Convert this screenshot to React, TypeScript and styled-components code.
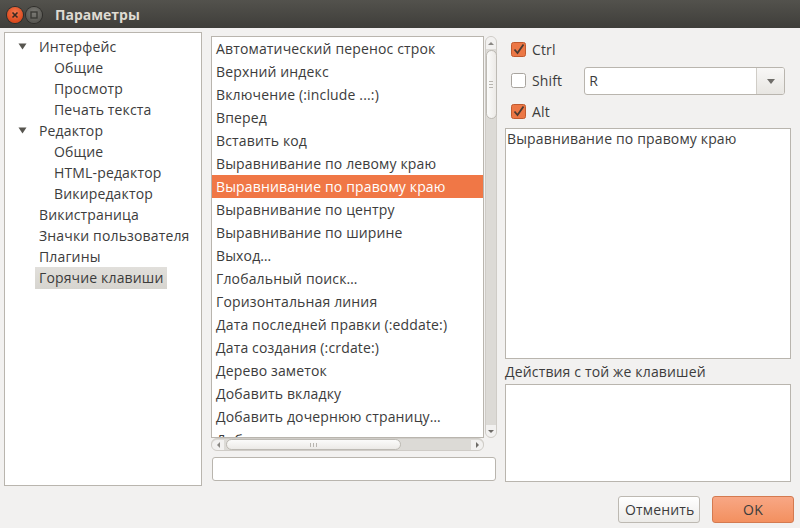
import React from 'react';
import styled, { createGlobalStyle, css } from 'styled-components';

const FONT = `"Open Sans", "Noto Sans", "DejaVu Sans", sans-serif`;
const TEXT = '#3c3c3c';
const BORDER = '#b9b5ae';

const GlobalStyle = createGlobalStyle`
  html, body {
    margin: 0;
    padding: 0;
    background: #f2f1f0;
  }
  body {
    font-family: ${FONT};
    font-size: 14px;
    letter-spacing: 0.15px;
    color: ${TEXT};
  }
`;

const Window = styled.div`
  width: 800px;
  height: 528px;
  display: flex;
  flex-direction: column;
  background: #f2f1f0;
  overflow: hidden;
`;

const TitleBar = styled.div`
  height: 28px;
  flex: none;
  display: flex;
  align-items: center;
  padding-left: 7px;
  gap: 3px;
  background: linear-gradient(#53524d, #3f3e3a);
  box-sizing: border-box;
`;

const WinButton = styled.div<{ $close?: boolean }>`
  width: 16px;
  height: 16px;
  border-radius: 50%;
  display: flex;
  align-items: center;
  justify-content: center;
  margin-top: 2px;
  box-shadow: 0 0 0 1px #2e2d2a;
  ${(p) =>
    p.$close
      ? css`
          background: radial-gradient(circle at 50% 35%, #f4784e, #dc4a1e 70%);
        `
      : css`
          background: radial-gradient(circle at 50% 35%, #7b7a75, #5a5954 70%);
        `}
`;

const Title = styled.div`
  margin-left: 10px;
  font-weight: bold;
  font-size: 14px;
  letter-spacing: 0;
  color: #dfdbd2;
`;

const Main = styled.div`
  height: 458px;
  flex: none;
  display: flex;
  padding: 4px 9px 0 4px;
  box-sizing: border-box;
  gap: 9px;
`;

const TreePanel = styled.div`
  width: 198px;
  height: 454px;
  flex: none;
  box-sizing: border-box;
  background: #fff;
  border: 1px solid ${BORDER};
  padding-top: 3px;
`;

const TreeRow = styled.div<{ $level: number }>`
  height: 21px;
  display: flex;
  align-items: center;
  padding-left: ${(p) => p.$level * 15}px;
`;

const ArrowSlot = styled.div`
  width: 30px;
  flex: none;
  display: flex;
  align-items: center;
  padding-left: 13px;
  box-sizing: border-box;
`;

const TreeLabel = styled.div<{ $selected?: boolean }>`
  height: 21px;
  line-height: 21px;
  padding: 0 4px;
  white-space: nowrap;
  ${(p) =>
    p.$selected &&
    css`
      background: linear-gradient(#e1dfdb, #d6d4cf);
      height: 22px;
      line-height: 22px;
    `}
`;

const Middle = styled.div`
  width: 285px;
  flex: none;
  display: flex;
  flex-direction: column;
  padding-top: 4px;
`;

const ListGrid = styled.div`
  display: grid;
  grid-template-columns: 273px 12px;
  grid-template-rows: 401px 13px;
  column-gap: 1px;
`;

const ListBox = styled.div`
  background: #fff;
  border: 1px solid ${BORDER};
  box-sizing: border-box;
  overflow: hidden;
  height: 402px;
`;

const ListRow = styled.div<{ $selected?: boolean }>`
  height: 23px;
  line-height: 23px;
  padding-left: 4px;
  white-space: nowrap;
  ${(p) =>
    p.$selected &&
    css`
      background: #f07746;
      color: #fff;
    `}
`;

const VScroll = styled.div`
  display: flex;
  flex-direction: column;
  align-items: center;
  background: #dcdad6;
  border-radius: 6px;
  border: 1px solid #cfccc7;
  box-sizing: border-box;
  height: 402px;
`;

const HScroll = styled.div`
  display: flex;
  align-items: center;
  background: #dcdad6;
  border-radius: 6px;
  border: 1px solid #cfccc7;
  box-sizing: border-box;
  height: 13px;
  margin-top: 1px;
`;

const ScrollArrow = styled.div<{ $dir: 'up' | 'down' | 'left' | 'right' }>`
  flex: none;
  width: 10px;
  height: 10px;
  display: flex;
  align-items: center;
  justify-content: center;
  background: #f2f1f0;
  ${(p) =>
    p.$dir === 'up'
      ? 'border-radius: 5px 5px 0 0; height: 12px;'
      : p.$dir === 'down'
        ? 'border-radius: 0 0 5px 5px; height: 12px;'
        : p.$dir === 'left'
          ? 'border-radius: 5px 0 0 5px; width: 12px;'
          : 'border-radius: 0 5px 5px 0; width: 12px;'}
  &::after {
    content: '';
    border: 3px solid transparent;
    ${(p) =>
      p.$dir === 'up'
        ? 'border-bottom: 3px solid #8a8884; margin-top: -3px;'
        : p.$dir === 'down'
          ? 'border-top: 3px solid #6e6c68; margin-bottom: -3px;'
          : p.$dir === 'left'
            ? 'border-right: 3px solid #8a8884; margin-left: -3px;'
            : 'border-left: 3px solid #6e6c68; margin-right: -3px;'}
  }
`;

const Thumb = styled.div<{ $horizontal?: boolean }>`
  flex: none;
  background: linear-gradient(
    ${(p) => (p.$horizontal ? '180deg' : '90deg')},
    #fbfbfa,
    #eceae7
  );
  border: 1px solid #bdbab4;
  border-radius: 6px;
  box-sizing: border-box;
  display: flex;
  align-items: center;
  justify-content: center;
  ${(p) =>
    p.$horizontal
      ? css`
          width: 175px;
          height: 11px;
          margin-left: 2px;
        `
      : css`
          width: 11px;
          height: 69px;
          margin-top: 1px;
        `}
`;

const Grip = styled.div<{ $horizontal?: boolean }>`
  ${(p) =>
    p.$horizontal
      ? css`
          width: 7px;
          height: 4px;
          background: repeating-linear-gradient(90deg, #b8b5af 0 1px, transparent 1px 3px);
        `
      : css`
          width: 4px;
          height: 7px;
          background: repeating-linear-gradient(180deg, #b8b5af 0 1px, transparent 1px 3px);
        `}
`;

const Spacer = styled.div`
  flex: 1;
`;

const Entry = styled.div`
  margin: 7px 0 0 1px;
  height: 24px;
  background: #fff;
  border: 1px solid ${BORDER};
  border-radius: 3px;
  box-sizing: border-box;
`;

const Right = styled.div`
  flex: 1;
  display: flex;
  flex-direction: column;
  padding-top: 2px;
`;

const CheckRow = styled.div`
  height: 31px;
  display: flex;
  align-items: center;
  padding-left: 6px;
  gap: 6px;
`;

const Combo = styled.div`
  margin-left: 16px;
  width: 201px;
  height: 28px;
  display: flex;
  background: #fff;
  border: 1px solid ${BORDER};
  border-radius: 3px;
  box-sizing: border-box;
  overflow: hidden;
`;

const ComboText = styled.div`
  flex: 1;
  line-height: 26px;
  padding-left: 4px;
`;

const ComboButton = styled.div`
  width: 27px;
  border-left: 1px solid #d0cdc7;
  background: linear-gradient(#f8f7f6, #e8e6e2);
  display: flex;
  align-items: center;
  justify-content: center;
  &::after {
    content: '';
    border: 4px solid transparent;
    border-top: 5px solid #6f6d69;
    margin-top: 5px;
  }
`;

const TextBox = styled.div<{ $grow?: boolean }>`
  background: #fff;
  border: 1px solid ${BORDER};
  box-sizing: border-box;
  padding: 1px 1px;
  line-height: 18px;
  ${(p) => (p.$grow ? 'flex: 1; margin-bottom: 4px;' : 'height: 231px; margin-top: 1px;')}
`;

const Label = styled.div`
  height: 25px;
  line-height: 26px;
`;

const Footer = styled.div`
  flex: 1;
  display: flex;
  justify-content: flex-end;
  align-items: flex-start;
  padding: 10px 6px 0 0;
  gap: 12px;
`;

const Button = styled.button<{ $primary?: boolean }>`
  width: 82px;
  height: 27px;
  font-family: ${FONT};
  font-size: 14px;
  letter-spacing: 0.15px;
  color: ${TEXT};
  border-radius: 3px;
  cursor: pointer;
  ${(p) =>
    p.$primary
      ? css`
          background: linear-gradient(#f8a785, #f3905f);
          border: 1px solid #d47a50;
        `
      : css`
          background: linear-gradient(#ffffff, #ecebe8);
          border: 1px solid #bdb9b2;
        `}
`;

function Triangle() {
  return (
    <svg width="9" height="7" viewBox="0 0 9 7">
      <path d="M0.5 0.5 L8.5 0.5 L4.5 6.5 Z" fill="#57554f" />
    </svg>
  );
}

function CheckBox({ checked }: { checked?: boolean }) {
  return (
    <svg width="15" height="15" viewBox="0 0 15 15">
      {checked ? (
        <>
          <rect x="0.5" y="0.5" width="14" height="14" rx="2" fill="#ec7745" stroke="#c05a2f" />
          <path d="M3.5 7.5 L6.5 11 L12.5 2.5" stroke="#4a3a32" strokeWidth="1.8" fill="none" />
        </>
      ) : (
        <rect x="0.5" y="0.5" width="14" height="14" rx="2" fill="#fff" stroke="#a8a49e" />
      )}
    </svg>
  );
}

const tree: { label: string; level: number; expand?: boolean; selected?: boolean }[] = [
  { label: 'Интерфейс', level: 0, expand: true },
  { label: 'Общие', level: 1 },
  { label: 'Просмотр', level: 1 },
  { label: 'Печать текста', level: 1 },
  { label: 'Редактор', level: 0, expand: true },
  { label: 'Общие', level: 1 },
  { label: 'HTML-редактор', level: 1 },
  { label: 'Викиредактор', level: 1 },
  { label: 'Викистраница', level: 0 },
  { label: 'Значки пользователя', level: 0 },
  { label: 'Плагины', level: 0 },
  { label: 'Горячие клавиши', level: 0, selected: true },
];

const actions = [
  'Автоматический перенос строк',
  'Верхний индекс',
  'Включение (:include ...:)',
  'Вперед',
  'Вставить код',
  'Выравнивание по левому краю',
  'Выравнивание по правому краю',
  'Выравнивание по центру',
  'Выравнивание по ширине',
  'Выход…',
  'Глобальный поиск…',
  'Горизонтальная линия',
  'Дата последней правки (:eddate:)',
  'Дата создания (:crdate:)',
  'Дерево заметок',
  'Добавить вкладку',
  'Добавить дочернюю страницу…',
  'Добавить метки к ветке',
];

export default function App() {
  return (
    <>
      <GlobalStyle />
      <Window>
        <TitleBar>
          <WinButton $close>
            <svg width="8" height="8" viewBox="0 0 8 8">
              <path d="M1.5 1.5 L6.5 6.5 M6.5 1.5 L1.5 6.5" stroke="#3a2a22" strokeWidth="1.6" />
            </svg>
          </WinButton>
          <WinButton>
            <svg width="8" height="8" viewBox="0 0 8 8">
              <rect x="1" y="1" width="6" height="6" fill="none" stroke="#3a3935" strokeWidth="1.4" />
            </svg>
          </WinButton>
          <Title>Параметры</Title>
        </TitleBar>
        <Main>
          <TreePanel>
            {tree.map((t, i) => (
              <TreeRow key={i} $level={t.level}>
                <ArrowSlot>{t.expand && <Triangle />}</ArrowSlot>
                <TreeLabel $selected={t.selected}>{t.label}</TreeLabel>
              </TreeRow>
            ))}
          </TreePanel>
          <Middle>
            <ListGrid>
              <ListBox>
                {actions.map((a, i) => (
                  <ListRow key={i} $selected={i === 6}>
                    {a}
                  </ListRow>
                ))}
              </ListBox>
              <VScroll>
                <ScrollArrow $dir="up" />
                <Thumb>
                  <Grip />
                </Thumb>
                <Spacer />
                <ScrollArrow $dir="down" />
              </VScroll>
              <HScroll>
                <ScrollArrow $dir="left" />
                <Thumb $horizontal>
                  <Grip $horizontal />
                </Thumb>
                <Spacer />
                <ScrollArrow $dir="right" />
              </HScroll>
            </ListGrid>
            <Entry />
          </Middle>
          <Right>
            <CheckRow>
              <CheckBox checked />
              Ctrl
            </CheckRow>
            <CheckRow>
              <CheckBox />
              Shift
              <Combo>
                <ComboText>R</ComboText>
                <ComboButton />
              </Combo>
            </CheckRow>
            <CheckRow>
              <CheckBox checked />
              Alt
            </CheckRow>
            <TextBox>Выравнивание по правому краю</TextBox>
            <Label>Действия с той же клавишей</Label>
            <TextBox $grow />
          </Right>
        </Main>
        <Footer>
          <Button>Отменить</Button>
          <Button $primary>OK</Button>
        </Footer>
      </Window>
    </>
  );
}
